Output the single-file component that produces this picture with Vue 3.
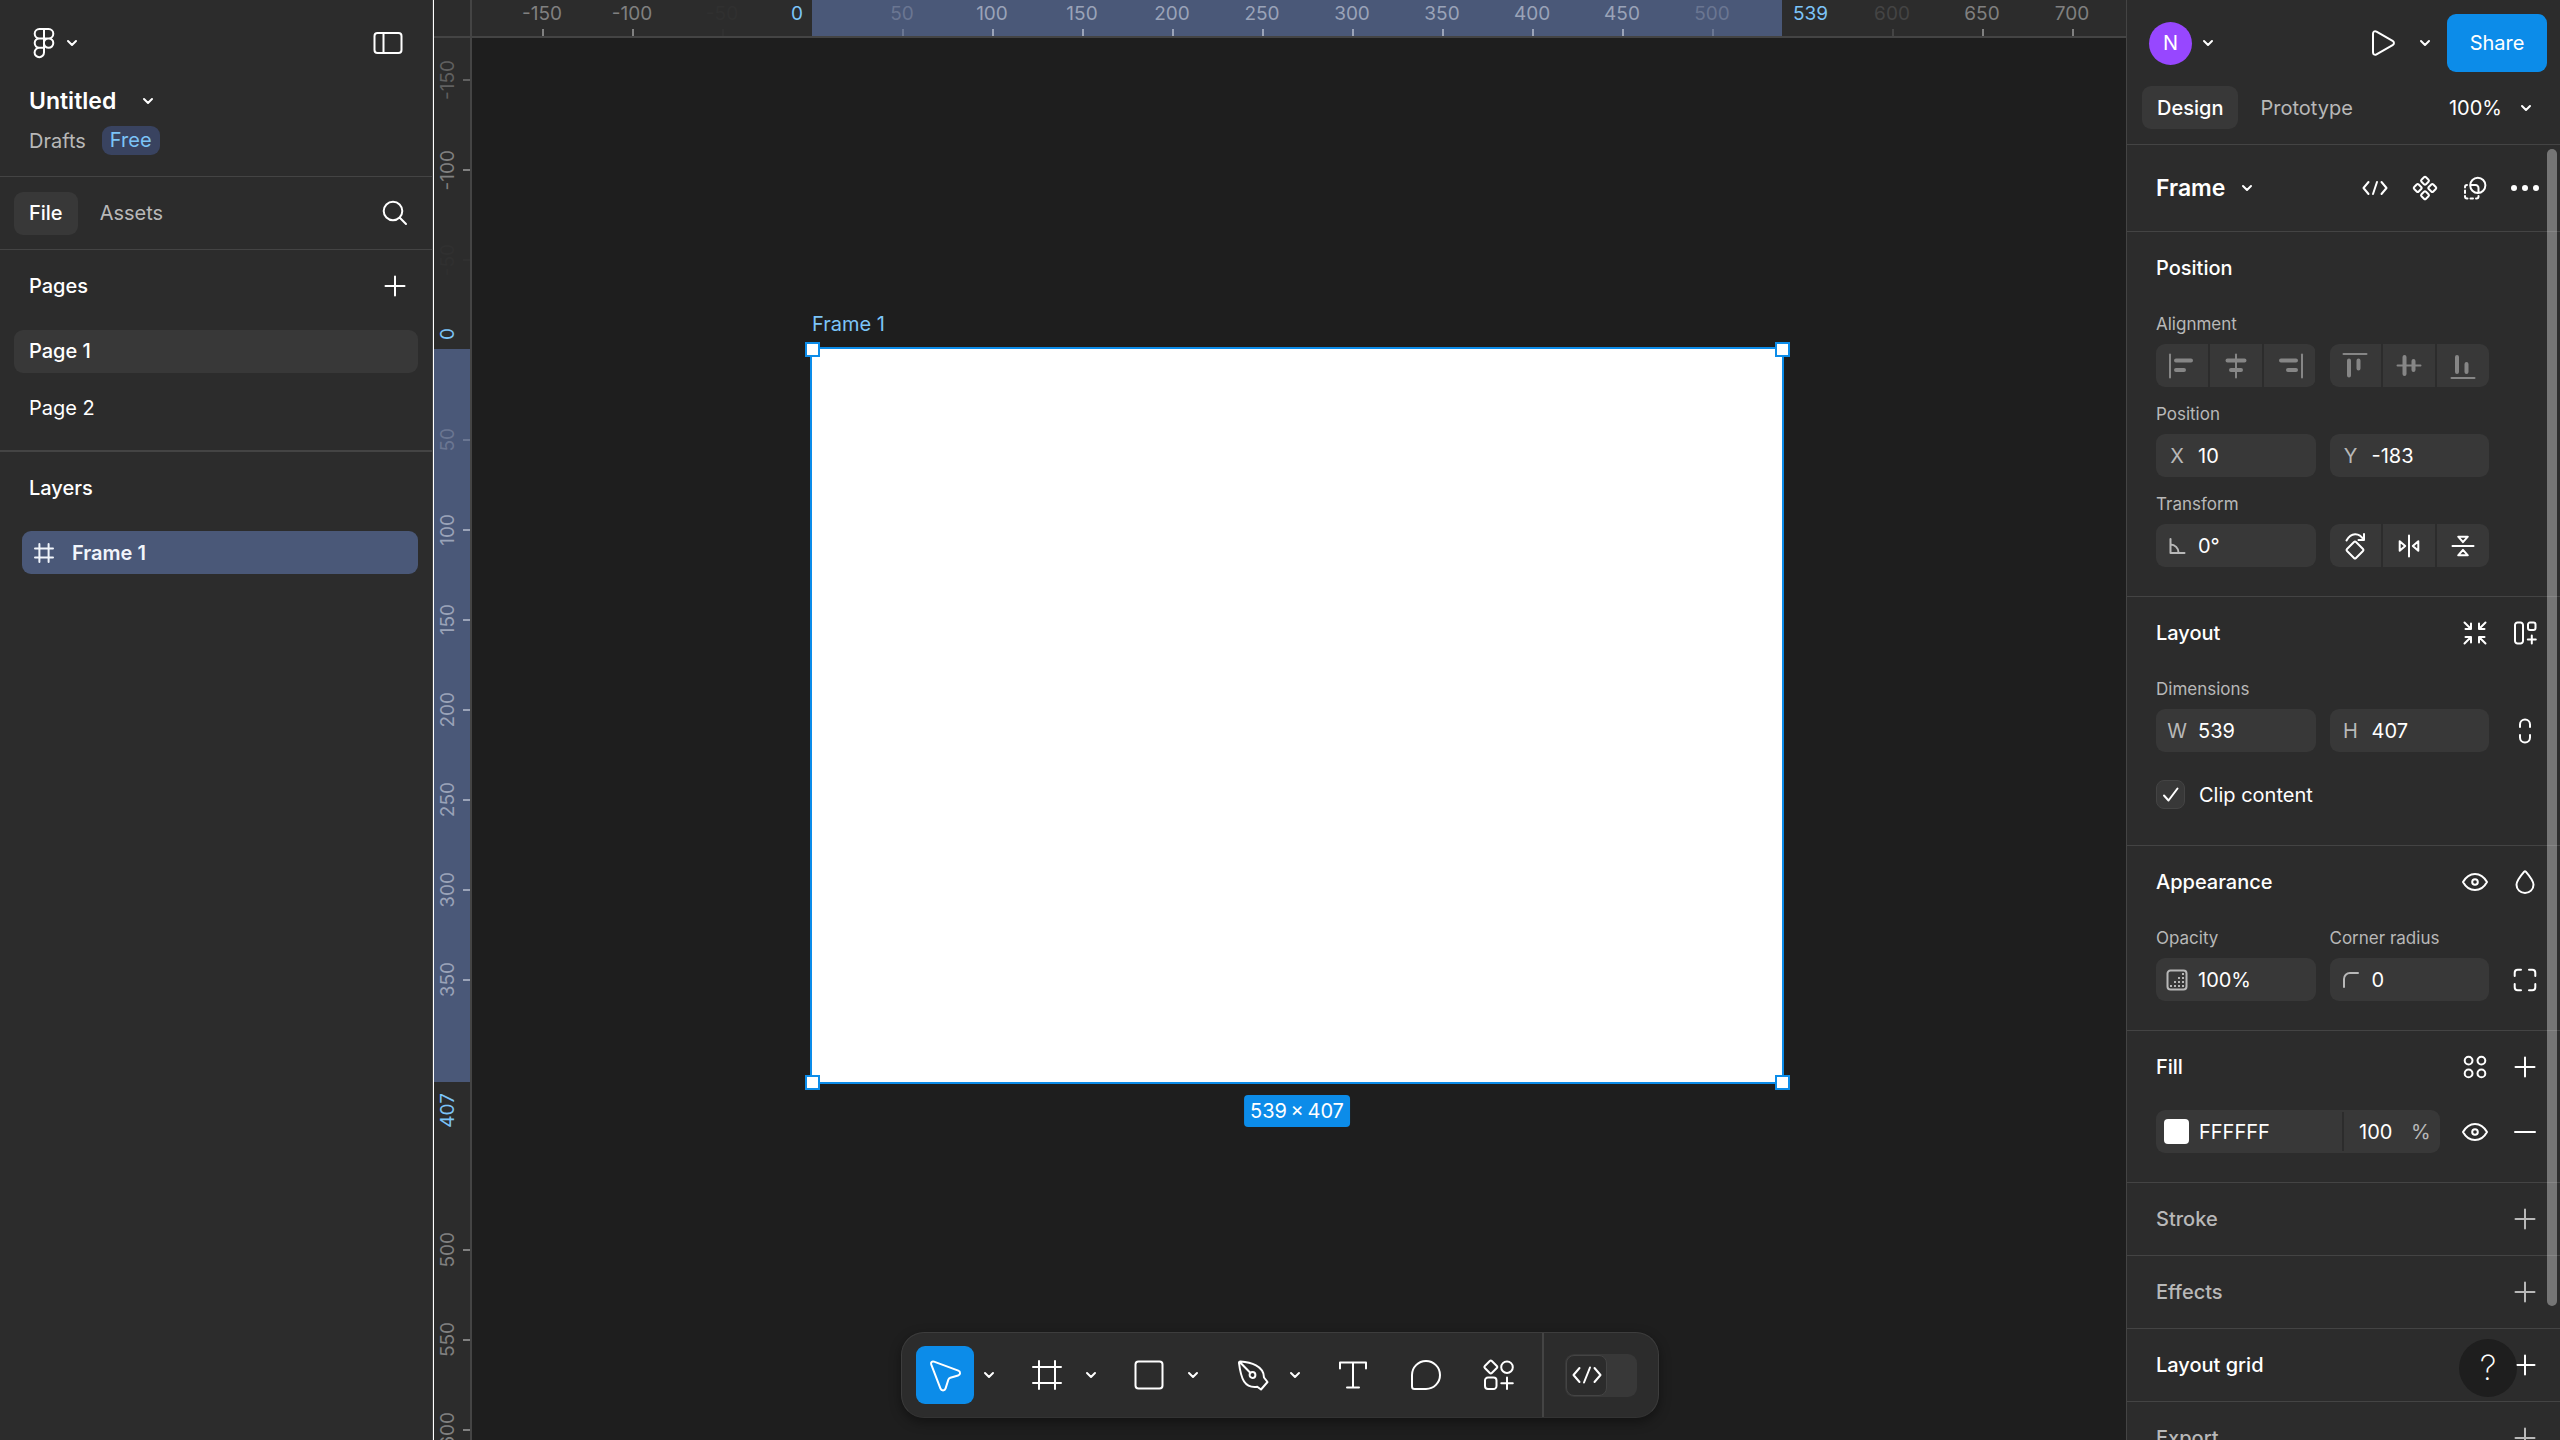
<script setup>
import { h } from 'vue'

const circle = (x, y, r) => `M${x - r} ${y}a${r} ${r} 0 1 0 ${2 * r} 0a${r} ${r} 0 1 0 ${-2 * r} 0z`
const diamond = (x, y, r) => `M${x - 1} ${y - r + 1}q1 -1 2 0L${x + r - 1} ${y - 1}q1 1 0 2L${x + 1} ${y + r - 1}q-1 1 -2 0L${x - r + 1} ${y + 1}q-1 -1 0 -2z`
const box = (x, y, w, hgt, r) => `M${x + r} ${y}h${w - 2 * r}a${r} ${r} 0 0 1 ${r} ${r}v${hgt - 2 * r}a${r} ${r} 0 0 1 ${-r} ${r}h${2 * r - w}a${r} ${r} 0 0 1 ${-r} ${-r}v${2 * r - hgt}a${r} ${r} 0 0 1 ${r} ${-r}z`

// Every glyph is drawn around (0, 0) on a 44 unit square.
const glyphs = {
  logo: 'M0 -14h-4.6a4.7 4.7 0 0 0 0 9.4H0zM0 -14h4.6a4.7 4.7 0 0 1 0 9.4H0M0 -4.6h-4.6a4.7 4.7 0 0 0 0 9.4H0zM0 4.8h-4.6a4.7 4.7 0 1 0 4.6 4.7z' + circle(4.6, 0.1, 4.7),
  sidebar: box(-13.5, -10, 27, 20, 3) + 'M-4.5 -10v20',
  search: circle(-2, -2, 9.3) + 'M4.8 4.8l6.2 6.2',
  plus: 'M-9.5 0h19M0 -9.5v19',
  minus: 'M-10 0h20',
  hash: 'M-4.6 -9v18M4.6 -9v18M-9 -4.6h18M-9 4.6h18',
  play: 'M-10 -9.2c0 -2.2 1.6 -3.2 3.5 -2.2L9.6 -2.1c1.8 1 1.8 3.2 0 4.2L-6.5 11.4c-1.9 1 -3.5 0 -3.5 -2.2z',
  code: 'M-6.5 -6l-5 6l5 6M6.5 -6l5 6l-5 6M2 -6l-4 12',
  component: diamond(0, -7.3, 4.5) + diamond(0, 7.3, 4.5) + diamond(-7.3, 0, 4.5) + diamond(7.3, 0, 4.5),
  mask: circle(2.8, -2.7, 7.6) + 'M-4 -3H0.5a3 3 0 0 1 3 3V4M-10 -0.5v-0.5a2 2 0 0 1 2 -2M-10 2.5v2.5M-10 8v0.5a2 2 0 0 0 2 2h0.5M-4.5 10.5h2.5M1 10.5h0.5a2 2 0 0 0 2 -2V8',
  shrink: 'M-10.5 -10.5l6.5 6.5M-4 -9.5V-4H-9.5M10.5 -10.5L4 -4M4 -9.5V-4H9.5M-10.5 10.5L-4 4M-4 9.5V4H-9.5M10.5 10.5L4 4M4 9.5V4H9.5',
  autolayout: box(-10, -10.5, 8, 21, 2.5) + box(3, -10.5, 7.5, 7.5, 2) + 'M6.8 2.5v8M2.8 6.5h8',
  link: 'M-5 -4v-2.5a5 5 0 0 1 10 0V-4M-5 4v2.5a5 5 0 0 0 10 0V4',
  eye: 'M-12 0C-6 -10.8 6 -10.8 12 0C6 10.8 -6 10.8 -12 0z' + circle(0, 0, 2.8),
  drop: 'M-0.8 -10.3C-4.5 -6 -8.5 -1 -8.5 2.8a8.5 8.2 0 0 0 17 0C8.5 -1 4.5 -6 0.8 -10.3q-0.8 -0.8 -1.6 0z',
  corners: 'M-10.3 -4v-3.3a3 3 0 0 1 3 -3H-4M4 -10.3h3.3a3 3 0 0 1 3 3V-4M10.3 4v3.3a3 3 0 0 1 -3 3H4M-4 10.3h-3.3a3 3 0 0 1 -3 -3V4',
  styles: circle(-6.4, -6.4, 3.9) + circle(6.4, -6.4, 3.9) + circle(-6.4, 6.4, 3.9) + circle(6.4, 6.4, 3.9),
  opacity: box(-9.5, -9.5, 19, 19, 3),
  radius: 'M-7 7V-1a6 6 0 0 1 6 -6H7',
  angle: 'M-6.5 -7V7H7.5M-6.5 -1.5a8 8 0 0 1 8 8',
  rotate: diamond(0, 4, 9) + 'M-8.5 -5.5C-4 -13.5 4 -14 8.8 -6M9 -12v6H3.5',
  flipH: 'M0 -10.5v21M-9.3 -4.8v9.6L-3.8 0zM9.3 -4.8v9.6L3.8 0z',
  flipV: 'M-10.5 0h21M-4.8 -9.3h9.6L0 -3.8zM-4.8 9.3h9.6L0 3.8z',
  cursor: 'M-13.8 -10.6c-0.7 -2 0.9 -3.5 2.8 -2.8L13.3 -4.4c2.4 0.9 2.3 4.2 -0.2 4.9L5.3 2.7c-1.1 0.3 -1.6 0.8 -1.9 1.8L0.5 13.6c-0.8 2.4 -4.1 2.4 -5 0z',
  frame: 'M-8 -14v28M8 -14v28M-14 -8h28M-14 8h28',
  rect: box(-13.5, -13.5, 27, 27, 3),
  pen: 'M-12 -12q-0.2 -1.5 1.5 -1.4C-0.5 -12.8 13 -9 13 2.5L16.5 7L10 14.5L6.3 11.8C-6.5 13.5 -10 4 -12 -12zM-11.3 -13L-0.5 -2' + circle(1.5, 0, 2.9),
  text: 'M-13 -6.5V-12.5h26v6M0 -12.5v25M-6 12.5h12',
  comment: 'M-14 11.5V0a14 14 0 1 1 14 14H-11.5a2.5 2.5 0 0 1 -2.5 -2.5z',
  actions: diamond(-8.2, -8, 7) + circle(8, -7.8, 5.8) + box(-14, 2.5, 11.5, 11.5, 3) + 'M8 2.5v11.5M2.3 8.3h11.5',
  devmode: 'M-7.5 -7l-6 7l6 7M7.5 -7l6 7l-6 7M3 -7.5l-6 15',
  check: 'M-7 0.5l4.5 5L6.5 -6.5',
  chevron: 'M-4 -2l4 4l4 -4'
}
const alignGlyphs = {
  left: ['M-12 -11.5v23', 'M-6 -5.5H9M-6 4H2'],
  hcenter: ['M0 -11.5v23', 'M-8.5 -5.5h17M-5 4h10'],
  right: ['M12 -11.5v23', 'M6 -5.5H-9M6 4H-2'],
  top: ['M-11.5 -12h23', 'M-6 -5.5V9.5M3.5 -5.5V2.5'],
  vcenter: ['M-11.5 -0.5h23', 'M-4.5 -9v17M4.5 -5v9'],
  bottom: ['M-11.5 12h23', 'M-6 -9V6M3.5 -2V6']
}
const dots = [[6, -6], [6, -2], [2, -2], [6, 2], [2, 2], [-2, 2], [6, 6], [2, 6], [-2, 6], [-6, 6]]

const Icon = ({ name }) => h('svg', { class: ['icon', name], viewBox: '-22 -22 44 44', 'aria-hidden': 'true' }, [
  h('path', { d: glyphs[name] }),
  name === 'opacity' ? h('g', dots.map(([x, y]) => h('rect', { x: x - 1, y: y - 1, width: 2, height: 2, fill: 'currentColor', stroke: 'none' }))) : null
])
Icon.props = ['name']

const AlignIcon = ({ name }) => h('svg', { class: 'icon', viewBox: '-22 -22 44 44', 'aria-hidden': 'true' }, [
  h('path', { d: alignGlyphs[name][0] }),
  h('path', { d: alignGlyphs[name][1], 'stroke-width': 4, style: 'stroke-width: 4' })
])
AlignIcon.props = ['name']

const pages = ['Page 1', 'Page 2']
const horizontalAlign = ['left', 'hcenter', 'right']
const verticalAlign = ['top', 'vcenter', 'bottom']
const collapsed = [
  { title: 'Stroke', active: false },
  { title: 'Effects', active: false },
  { title: 'Layout grid', active: true },
  { title: 'Export', active: false }
]
const menuTools = ['cursor', 'frame', 'rect', 'pen']
const singleTools = ['text', 'comment', 'actions']

// Canvas geometry: 1.8 screen pixels for each document unit.
const zoom = 1.8
const origin = { x: 378, y: 349 }
const frame = { w: 970, h: 733 }
const mark = (value, tone = '') => ({ value, tone })
const topMarks = [
  mark(-150), mark(-100), mark(-50, 'hidden'), mark(50, 'in faint'),
  ...[100, 150, 200, 250, 300, 350, 400, 450].map(v => mark(v, 'in')),
  mark(500, 'in faint'), mark(600, 'faint'), mark(650), mark(700)
]
const leftMarks = [
  mark(-150, 'soft'), mark(-100), mark(-50, 'hidden'), mark(50, 'in faint'),
  ...[100, 150, 200, 250, 300, 350].map(v => mark(v, 'in')),
  mark(500), mark(550), mark(600)
]
</script>

<template>
  <div class="editor">
    <aside class="left">
      <div class="left-body">
        <header class="file-head">
          <div class="bar">
            <button class="logo-btn" aria-label="Main menu"><Icon name="logo" /><Icon name="chevron" /></button>
            <button class="tool" aria-label="Minimize UI"><Icon name="sidebar" /></button>
          </div>
          <button class="file-name">Untitled<Icon name="chevron" /></button>
          <div class="location"><a href="#">Drafts</a><span class="badge">Free</span></div>
        </header>
        <nav class="tabs">
          <button class="tab on">File</button>
          <button class="tab">Assets</button>
          <button class="tool push" aria-label="Find"><Icon name="search" /></button>
        </nav>
        <section class="pages">
          <div class="list-head"><h2>Pages</h2><button class="tool" aria-label="Add page"><Icon name="plus" /></button></div>
          <ul>
            <li v-for="(page, i) in pages" :key="page"><button class="row" :class="{ on: i === 0 }">{{ page }}</button></li>
          </ul>
        </section>
        <section class="layers">
          <div class="list-head"><h2>Layers</h2></div>
          <button class="layer"><Icon name="hash" />Frame 1</button>
        </section>
      </div>
    </aside>

    <main class="stage">
      <div class="ruler top">
        <div class="span" :style="{ left: origin.x + 'px', width: frame.w + 'px' }"></div>
        <span v-for="m in topMarks" :key="m.value" class="mark" :class="m.tone" :style="{ left: origin.x + m.value * zoom + 'px' }">{{ m.value }}</span>
        <span class="edge before" :style="{ left: origin.x + 'px' }">0</span>
        <span class="edge after" :style="{ left: origin.x + frame.w + 'px' }">539</span>
      </div>
      <div class="ruler side">
        <div class="span" :style="{ top: origin.y + 'px', height: frame.h + 'px' }"></div>
        <span v-for="m in leftMarks" :key="m.value" class="mark" :class="m.tone" :style="{ top: origin.y + m.value * zoom + 'px' }"><b>{{ m.value }}</b></span>
        <span class="edge before" :style="{ top: origin.y + 'px' }">0</span>
        <span class="edge after" :style="{ top: origin.y + frame.h + 'px' }">407</span>
      </div>
      <div class="artboard" :style="{ left: origin.x + 'px', top: origin.y + 'px', width: frame.w + 'px', height: frame.h + 'px' }">
        <span class="artboard-name">Frame 1</span>
        <i class="handle nw"></i><i class="handle ne"></i><i class="handle sw"></i><i class="handle se"></i>
        <span class="artboard-size">539&thinsp;×&thinsp;407</span>
      </div>
      <div class="toolbar" role="toolbar">
        <div class="tools">
          <div v-for="(tool, i) in menuTools" :key="tool" class="split">
            <button class="big" :class="{ on: i === 0 }" :aria-label="tool"><Icon :name="tool" /></button>
            <button class="caret" :aria-label="tool + ' options'"><Icon name="chevron" /></button>
          </div>
          <button v-for="tool in singleTools" :key="tool" class="big" :aria-label="tool"><Icon :name="tool" /></button>
        </div>
        <div class="mode">
          <button class="switch" role="switch" aria-checked="false" aria-label="Dev Mode"><span><Icon name="devmode" /></span></button>
        </div>
      </div>
    </main>

    <aside class="right">
      <header class="right-head">
        <div class="bar">
          <button class="user" aria-label="Account"><span class="avatar">N</span><Icon name="chevron" /></button>
          <button class="tool push" aria-label="Present"><Icon name="play" /></button>
          <button class="present-menu" aria-label="Present options"><Icon name="chevron" /></button>
          <button class="share">Share</button>
        </div>
        <nav class="modes">
          <button class="tab on">Design</button>
          <button class="tab">Prototype</button>
          <button class="zoom push">100%<Icon name="chevron" /></button>
        </nav>
      </header>
      <div class="props">
        <section class="type">
          <button class="type-name">Frame<Icon name="chevron" /></button>
          <div class="actions-row">
            <button class="tool" aria-label="Ready for dev"><Icon name="code" /></button>
            <button class="tool" aria-label="Create component"><Icon name="component" /></button>
            <button class="tool" aria-label="Use as mask"><Icon name="mask" /></button>
            <button class="tool" aria-label="More"><svg class="icon" viewBox="-22 -22 44 44"><g fill="currentColor" stroke="none"><circle cx="-11" cy="0" r="3" /><circle cx="0" cy="0" r="3" /><circle cx="11" cy="0" r="3" /></g></svg></button>
          </div>
        </section>

        <section class="block">
          <div class="head"><h2>Position</h2></div>
          <div class="group">
            <span class="label">Alignment</span>
            <div class="seg dim"><button v-for="a in horizontalAlign" :key="a" :aria-label="'Align ' + a"><AlignIcon :name="a" /></button></div>
            <div class="seg dim"><button v-for="a in verticalAlign" :key="a" :aria-label="'Align ' + a"><AlignIcon :name="a" /></button></div>
          </div>
          <div class="group">
            <span class="label">Position</span>
            <label class="field"><span>X</span><input value="10"></label>
            <label class="field"><span>Y</span><input value="-183"></label>
          </div>
          <div class="group">
            <span class="label">Transform</span>
            <label class="field"><span><Icon name="angle" /></span><input value="0°" aria-label="Rotation"></label>
            <div class="seg">
              <button aria-label="Rotate"><Icon name="rotate" /></button>
              <button aria-label="Flip horizontal"><Icon name="flipH" /></button>
              <button aria-label="Flip vertical"><Icon name="flipV" /></button>
            </div>
          </div>
        </section>

        <section class="block">
          <div class="head"><h2>Layout</h2>
            <div class="actions-row">
              <button class="tool" aria-label="Resize to fit"><Icon name="shrink" /></button>
              <button class="tool" aria-label="Use auto layout"><Icon name="autolayout" /></button>
            </div>
          </div>
          <div class="group">
            <span class="label">Dimensions</span>
            <label class="field"><span>W</span><input value="539"></label>
            <label class="field"><span>H</span><input value="407"></label>
            <button class="tool" aria-label="Lock aspect ratio"><Icon name="link" /></button>
          </div>
          <label class="clip"><span class="tick"><input type="checkbox" checked><Icon name="check" /></span>Clip content</label>
        </section>

        <section class="block">
          <div class="head"><h2>Appearance</h2>
            <div class="actions-row">
              <button class="tool" aria-label="Visibility"><Icon name="eye" /></button>
              <button class="tool" aria-label="Blend mode"><Icon name="drop" /></button>
            </div>
          </div>
          <div class="group">
            <label class="label one" for="opacity">Opacity</label>
            <label class="label one" for="corner">Corner radius</label>
            <div class="field first"><span><Icon name="opacity" /></span><input id="opacity" value="100%"></div>
            <div class="field"><span><Icon name="radius" /></span><input id="corner" value="0"></div>
            <button class="tool" aria-label="Individual corners"><Icon name="corners" /></button>
          </div>
        </section>

        <section class="block">
          <div class="head"><h2>Fill</h2>
            <div class="actions-row">
              <button class="tool" aria-label="Styles"><Icon name="styles" /></button>
              <button class="tool" aria-label="Add fill"><Icon name="plus" /></button>
            </div>
          </div>
          <div class="fill">
            <div class="paint">
              <button class="swatch" aria-label="Fill colour"></button>
              <input class="hex" value="FFFFFF" aria-label="Hex">
              <label class="percent"><input value="100" aria-label="Fill opacity"><span>%</span></label>
            </div>
            <div class="actions-row">
              <button class="tool" aria-label="Toggle fill"><Icon name="eye" /></button>
              <button class="tool" aria-label="Remove fill"><Icon name="minus" /></button>
            </div>
          </div>
        </section>

        <section v-for="item in collapsed" :key="item.title" class="block flat" :class="{ muted: !item.active }">
          <div class="head"><h2>{{ item.title }}</h2><button class="tool" :aria-label="'Add ' + item.title"><Icon name="plus" /></button></div>
        </section>
        <div class="scroll-thumb"></div>
        <button class="help" aria-label="Help">?</button>
      </div>
    </aside>
  </div>
</template>

<style>
body {
  margin: 0;
  background: #1e1e1e;
}
</style>

<style scoped>
.editor {
  display: grid;
  grid-template-columns: 434px minmax(0, 1fr) 434px;
  height: 100vh;
  overflow: hidden;
  background: #1e1e1e;
  color: #fff;
  font: 400 20px/28px Inter, "Noto Sans", sans-serif;
}
.editor * {
  box-sizing: border-box;
}
button,
input {
  margin: 0;
  padding: 0;
  border: 0;
  background: none;
  color: inherit;
  font: inherit;
}
button {
  display: flex;
  align-items: center;
  flex: none;
}
h2 {
  margin: 0;
  font: inherit;
  font-weight: 550;
}
ul {
  margin: 0;
  padding: 0;
  list-style: none;
}
:deep(.icon) {
  display: block;
  flex: none;
  width: 44px;
  height: 44px;
  fill: none;
  stroke: currentColor;
  stroke-width: 2;
  stroke-linecap: round;
  stroke-linejoin: round;
}
.bar {
  display: flex;
  align-items: center;
  height: 86px;
}
.tool {
  justify-content: center;
  width: 44px;
  height: 44px;
}
.push {
  margin-left: auto;
}
.tab {
  height: 43px;
  padding: 0 15px;
  border-radius: 9px;
  color: #b8b8b8;
}
.tab.on {
  background: #383838;
  color: #fff;
  font-weight: 550;
}

/* Left panel */
.left {
  border-right: 1px solid #fff;
  background: #2c2c2c;
}
.left-body {
  height: 100%;
  border-right: 1px solid #444;
}
.file-head {
  height: 177px;
  border-bottom: 1px solid #444;
}
.file-head .bar {
  justify-content: space-between;
  padding: 0 22px;
}
.logo-btn .chevron {
  margin: 0 -16px;
}
.file-name {
  height: 30px;
  padding-left: 29px;
  font-size: 23px;
  font-weight: 600;
}
.file-name .icon {
  margin-left: 10px;
}
.location {
  display: flex;
  gap: 16px;
  align-items: center;
  height: 29px;
  margin-top: 10px;
  padding-left: 29px;
}
.location a {
  color: #b8b8b8;
  text-decoration: none;
}
.badge {
  padding: 0 8px;
  border-radius: 9px;
  background: #394360;
  color: #7cc4f8;
  line-height: 29px;
}
.tabs {
  display: flex;
  gap: 7px;
  align-items: center;
  height: 73px;
  padding: 0 15px 0 14px;
  border-bottom: 1px solid #444;
}
.list-head {
  display: flex;
  align-items: center;
  justify-content: space-between;
  height: 72px;
  padding: 0 15px 0 29px;
}
.pages {
  padding-bottom: 20px;
  border-bottom: 2px solid #444;
}
.pages ul {
  display: grid;
  gap: 14px;
  padding: 8px 14px 0;
}
.row {
  width: 100%;
  height: 43px;
  padding: 0 15px 2px;
  border-radius: 9px;
}
.row.on {
  background: #383838;
  font-weight: 500;
}
.layer {
  width: calc(100% - 36px);
  height: 43px;
  margin: 7px 14px 0 22px;
  border-radius: 9px;
  background: #4a5878;
  color: #f1f5fb;
  font-weight: 600;
}
.layer .icon {
  margin-right: 6px;
}

/* Canvas */
.stage {
  position: relative;
  overflow: hidden;
}
.ruler {
  position: absolute;
  top: 0;
  left: 0;
  overflow: hidden;
  background: #2c2c2c;
  color: #808080;
  font-size: 19px;
  line-height: 24px;
}
.ruler.top {
  right: 0;
  height: 38px;
  border-bottom: 2px solid #444;
}
.ruler.side {
  bottom: 0;
  width: 38px;
  border-right: 2px solid #444;
  background: linear-gradient(#2c2c2c 36px, #444 36px, #444 38px, #2c2c2c 38px);
}
.span,
.mark,
.edge {
  position: absolute;
}
.span {
  background: #4a5878;
}
.top .span {
  top: 0;
  height: 36px;
}
.side .span {
  left: 0;
  width: 36px;
}
.mark {
  display: flex;
  align-items: center;
  justify-content: center;
}
.top .mark {
  top: 0;
  width: 60px;
  height: 36px;
  margin-left: -29px;
  padding-right: 2px;
  padding-bottom: 8px;
}
.mark::after {
  position: absolute;
  background: currentColor;
  content: "";
}
.top .mark::after {
  bottom: 0;
  left: 29px;
  width: 2px;
  height: 7px;
}
.side .mark {
  left: 0;
  width: 36px;
  height: 60px;
  margin-top: -29px;
  padding-right: 8px;
}
.side .mark::after {
  top: 29px;
  right: 0;
  width: 7px;
  height: 2px;
}
.side b,
.side .edge {
  font-weight: 400;
  writing-mode: sideways-lr;
}
.mark.in {
  color: #9aa3b8;
}
.mark.faint {
  color: #444;
}
.mark.in.faint {
  color: #6a7692;
}
.mark.soft {
  color: #606060;
}
.mark.hidden {
  color: #303030;
}
.edge {
  color: #7cc4f8;
}
.top .edge {
  top: 2px;
}
.top .before {
  margin-left: -21px;
}
.top .after {
  margin-left: 11px;
}
.side .edge {
  left: 2px;
  width: 24px;
}
.side .before {
  margin-top: -21px;
}
.side .after {
  margin-top: 11px;
}
.artboard {
  position: absolute;
  background: #fff;
  box-shadow: 0 0 0 2px #0c8ce9;
}
.artboard-name {
  position: absolute;
  bottom: 100%;
  left: 0;
  margin-bottom: 11px;
  color: #7cc4f8;
}
.artboard-size {
  position: absolute;
  top: 100%;
  left: 50%;
  margin-top: 13px;
  padding: 0 6px;
  border-radius: 4px;
  background: #0c8ce9;
  line-height: 32px;
  white-space: nowrap;
  transform: translateX(-50%);
}
.handle {
  position: absolute;
  width: 15px;
  height: 15px;
  margin: -7px -8px -8px -7px;
  border: 2px solid #0c8ce9;
  background: #fff;
}
.nw {
  top: 0;
  left: 0;
}
.ne {
  top: 0;
  right: 0;
}
.sw {
  bottom: 0;
  left: 0;
}
.se {
  right: 0;
  bottom: 0;
}
.toolbar {
  position: absolute;
  bottom: 22px;
  left: 50%;
  display: flex;
  height: 86px;
  border: 1px solid #3d3d3d;
  border-bottom-color: #333;
  border-radius: 23px;
  background: #2c2c2c;
  box-shadow: 0 4px 12px #0006;
  transform: translateX(-50%);
}
.tools {
  display: flex;
  gap: 15px;
  align-items: center;
  padding: 0 14px;
  border-right: 2px solid #444;
}
.split {
  display: flex;
  align-items: center;
}
.big {
  justify-content: center;
  width: 58px;
  height: 58px;
  border-radius: 9px;
}
.big.on {
  background: #0c8ce9;
}
.caret {
  justify-content: center;
  width: 29px;
  height: 58px;
}
.mode {
  display: flex;
  align-items: center;
  padding: 0 21px;
}
.switch {
  width: 72px;
  height: 43px;
  padding: 1px;
  border-radius: 9px;
  background: #383838;
}
.switch span {
  display: flex;
  align-items: center;
  justify-content: center;
  width: 41px;
  height: 41px;
  border: 1px solid #444;
  border-radius: 8px;
  background: #2c2c2c;
}

/* Right panel */
.right {
  display: flex;
  flex-direction: column;
  min-height: 0;
  border-left: 1px solid #444;
  background: #2c2c2c;
}
.right-head {
  flex: none;
  height: 145px;
  border-bottom: 1px solid #444;
}
.right-head .bar {
  padding: 0 13px 0 22px;
}
.avatar {
  width: 43px;
  height: 43px;
  border-radius: 50%;
  background: #9747ff;
  line-height: 43px;
}
.user .chevron {
  margin: 0 -6px;
}
.present-menu {
  justify-content: center;
  width: 44px;
  height: 44px;
  margin-left: -2px;
}
.share {
  justify-content: center;
  width: 100px;
  height: 58px;
  border-radius: 9px;
  background: #0c8ce9;
}
.modes {
  display: flex;
  gap: 7px;
  padding: 0 12px 0 15px;
}
.zoom .icon {
  margin-left: 2px;
}
.props {
  position: relative;
  flex: 1;
  min-height: 0;
  overflow: hidden;
}
.type {
  display: flex;
  align-items: center;
  justify-content: space-between;
  height: 87px;
  padding: 0 13px 0 29px;
  border-bottom: 1px solid #444;
}
.type-name {
  font-size: 23px;
  font-weight: 600;
}
.actions-row {
  display: flex;
  gap: 6px;
}
.block {
  padding: 0 13px 29px 29px;
  border-bottom: 1px solid #444;
}
.block.flat {
  padding-bottom: 0;
}
.muted {
  color: #b8b8b8;
}
.head {
  display: flex;
  align-items: center;
  justify-content: space-between;
  height: 72px;
}
.group {
  display: grid;
  grid-template-columns: 1fr 1fr 44px;
  column-gap: 14px;
  row-gap: 9px;
  padding-top: 9px;
}
.group + .group {
  padding-top: 16px;
}
.group .tool,
.fill .tool {
  height: 43px;
}
.label {
  grid-column: 1 / -1;
  color: #b8b8b8;
  font-size: 17px;
  line-height: 22px;
}
.label.one {
  grid-column: auto;
}
.field.first {
  grid-column: 1;
}
.field {
  display: flex;
  align-items: center;
  min-width: 0;
  height: 43px;
  border-radius: 9px;
  background: #383838;
}
.field span {
  display: flex;
  flex: none;
  justify-content: center;
  width: 42px;
  color: #b8b8b8;
}
.field input {
  flex: 1;
  min-width: 0;
}
.seg {
  display: grid;
  grid-template-columns: 1fr 1fr 1fr;
  gap: 2px;
  overflow: hidden;
  height: 43px;
  border-radius: 9px;
}
.seg button {
  justify-content: center;
  background: #383838;
}
.dim {
  color: #868686;
}
.clip {
  display: flex;
  gap: 14px;
  align-items: center;
  height: 43px;
  margin-top: 21px;
}
.tick {
  position: relative;
  display: flex;
  align-items: center;
  justify-content: center;
  width: 29px;
  height: 29px;
}
.tick input {
  position: absolute;
  inset: 0;
  border: 1px solid #444;
  border-radius: 8px;
  background: #383838;
  appearance: none;
}
.tick .icon {
  position: relative;
}
.fill {
  display: flex;
  gap: 13px;
  align-items: center;
  margin-top: 7px;
}
.paint {
  display: flex;
  flex: 1;
  align-items: center;
  min-width: 0;
  height: 43px;
  padding-left: 8px;
  border-radius: 9px;
  background: #383838;
}
.swatch {
  width: 25px;
  height: 25px;
  border-radius: 4px;
  background: #fff;
}
.hex {
  flex: 1;
  min-width: 0;
  padding-left: 10px;
}
.percent {
  display: flex;
  align-items: center;
  width: 98px;
  height: 39px;
  padding-left: 15px;
  border-left: 2px solid #2c2c2c;
}
.percent input {
  width: 52px;
}
.percent span {
  color: #b8b8b8;
}
.scroll-thumb {
  position: absolute;
  top: 4px;
  right: 3px;
  bottom: 134px;
  width: 10px;
  border-radius: 5px;
  background: #ffffff59;
}
.help {
  position: absolute;
  right: 43px;
  bottom: 43px;
  justify-content: center;
  width: 58px;
  height: 58px;
  border-radius: 50%;
  background: #1e1e1e;
  font-size: 34px;
  font-weight: 200;
}
</style>
